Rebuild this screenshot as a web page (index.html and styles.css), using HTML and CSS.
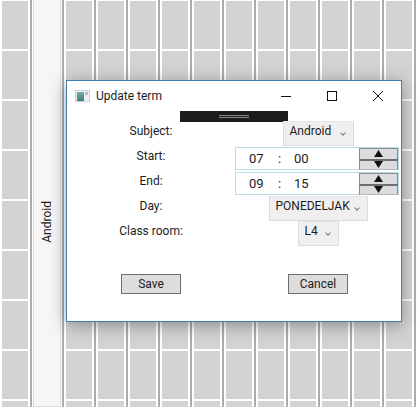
FILE: index.html
```html
<!DOCTYPE html>
<html lang="en">
    <head>
        <meta charset="UTF-8">
        <meta name="viewport" content="width=device-width, initial-scale=1.0">
        <title>Update term</title>
        <link rel="stylesheet" href="styles.css">
    </head>
    <body>
        <!-- Timetable behind the dialog -->
        <div class="timetable">
            <div class="column"><div class="cells"></div></div>
            <div class="column strip-column"><div class="strip"><span>Android</span></div></div>
            <div class="column"><div class="cells"></div></div>
            <div class="column"><div class="cells"></div></div>
            <div class="column"><div class="cells"></div></div>
            <div class="column"><div class="cells"></div></div>
            <div class="column"><div class="cells"></div></div>
            <div class="column"><div class="cells"></div></div>
            <div class="column"><div class="cells"></div></div>
            <div class="column"><div class="cells"></div></div>
            <div class="column"><div class="cells"></div></div>
            <div class="column"><div class="cells"></div></div>
            <div class="column"><div class="cells"></div></div>
        </div>

        <div class="dialog">
            <div class="title-bar">
                <svg class="app-icon" width="15" height="12" viewBox="0 0 15 12">
                    <defs>
                        <linearGradient id="icon-fill" x1="0" y1="0" x2="0" y2="1">
                            <stop offset="0" stop-color="#7fa9a6"/>
                            <stop offset="1" stop-color="#3d7f7c"/>
                        </linearGradient>
                    </defs>
                    <rect width="15" height="12" fill="#c9d2d6"/>
                    <rect x="1" y="1" width="13" height="10" fill="#eef1f2"/>
                    <rect x="2" y="2" width="7" height="9" fill="url(#icon-fill)"/>
                    <rect x="10" y="2" width="3" height="3" fill="#b4c2c7"/>
                </svg>
                <span class="title">Update term</span>
                <div class="window-buttons">
                    <svg width="12" height="12" viewBox="0 0 12 12"><path d="M1 6.5H11" stroke="#111" fill="none"/></svg>
                    <svg width="12" height="12" viewBox="0 0 12 12"><rect x="1.5" y="1.5" width="9" height="9" stroke="#111" fill="none"/></svg>
                    <svg width="12" height="12" viewBox="0 0 12 12"><path d="M1 1L11 11M11 1L1 11" stroke="#111" fill="none"/></svg>
                </div>
            </div>
            <div class="splitter"><div class="grip"></div></div>
            <div class="form">
                <label>Subject:</label>
                <div class="field"><div class="combo combo-subject">Android <span class="chevron"></span></div></div>
                <label>Start:</label>
                <div class="field">
                    <div class="time-picker">
                        <span class="hours">07</span><span class="colon">:</span><span class="minutes">00</span>
                        <div class="spinner">
                            <button><svg width="9" height="7" viewBox="0 0 9 7"><path d="M4.5 0L9 7H0Z"/></svg></button>
                            <button><svg width="9" height="7" viewBox="0 0 9 7"><path d="M0 0H9L4.5 7Z"/></svg></button>
                        </div>
                    </div>
                </div>
                <label>End:</label>
                <div class="field">
                    <div class="time-picker">
                        <span class="hours">09</span><span class="colon">:</span><span class="minutes">15</span>
                        <div class="spinner">
                            <button><svg width="9" height="7" viewBox="0 0 9 7"><path d="M4.5 0L9 7H0Z"/></svg></button>
                            <button><svg width="9" height="7" viewBox="0 0 9 7"><path d="M0 0H9L4.5 7Z"/></svg></button>
                        </div>
                    </div>
                </div>
                <label>Day:</label>
                <div class="field"><div class="combo combo-day">PONEDELJAK <span class="chevron"></span></div></div>
                <label>Class room:</label>
                <div class="field"><div class="combo combo-room">L4 <span class="chevron"></span></div></div>
            </div>
            <div class="actions">
                <div class="action"><button class="push">Save</button></div>
                <div class="action"><button class="push">Cancel</button></div>
            </div>
        </div>
    </body>
</html>
```

FILE: styles.css
```css
body {
    margin: 0;
    width: 418px;
    height: 407px;
    overflow: hidden;
    position: relative;
    background-color: white;
    font-family: Roboto, "Open Sans", sans-serif;
    font-size: 12px;
    color: #1c1c1c;
}
.timetable {
    display: flex;
    height: 407px;
}
.column {
    width: 28px;
    padding-left: 2px;
    border-right: 2px solid #acacb0;
    flex: none;
}
.cells {
    width: 26px;
    height: 407px;
    background: repeating-linear-gradient(white 0 1px, #d3d3d3 1px 49px, white 49px 50px);
}
.strip-column {
    padding-left: 1px;
    width: 29px;
}
.strip {
    width: 28px;
    height: 407px;
    box-sizing: border-box;
    border: 1px solid #dcdcdc;
    border-top: none;
    background-color: #f6f6f6;
    display: flex;
    align-items: center;
    justify-content: center;
}
.strip span {
    writing-mode: vertical-rl;
    transform: rotate(180deg);
    margin-top: 37px;
}
.dialog {
    position: absolute;
    left: 66px;
    top: 80px;
    width: 336px;
    height: 242px;
    box-sizing: border-box;
    border: 1px solid #3f7fb0;
    background-color: white;
    box-shadow: 0 3px 16px rgba(0, 0, 0, 0.35);
}
.title-bar {
    height: 30px;
    display: flex;
    align-items: center;
    padding-left: 8px;
}
.app-icon {
    flex: none;
}
.title {
    margin-left: 6px;
    flex: 1;
}
.window-buttons {
    display: flex;
    gap: 34px;
    padding-right: 17px;
}
.splitter {
    width: 108px;
    height: 11px;
    margin: 0 0 -1px 113px;
    background-color: #1c1c1c;
    display: flex;
    align-items: center;
    justify-content: center;
}
.grip {
    width: 30px;
    height: 3px;
    border-top: 1px solid #8a8a8a;
    border-bottom: 1px solid #8a8a8a;
    box-sizing: border-box;
}
.form {
    display: grid;
    grid-template-columns: 168px 166px;
    grid-auto-rows: 25px;
}
.form label {
    text-align: center;
    line-height: 17px;
    padding-top: 2px;
}
.field {
    display: flex;
    justify-content: center;
    align-items: flex-start;
}
.combo {
    height: 25px;
    box-sizing: border-box;
    border: 1px solid #dcdcdc;
    border-top-color: #e4e4e4;
    background-color: #efefef;
    padding: 0 6px 5px 6px;
    display: flex;
    align-items: center;
    justify-content: space-between;
    line-height: 18px;
    white-space: nowrap;
}
.combo-subject {
    width: 71px;
}
.combo-day {
    width: 99px;
}
.combo-room {
    width: 41px;
}
.chevron {
    width: 3px;
    height: 3px;
    border-right: 1px solid #777;
    border-bottom: 1px solid #777;
    transform: rotate(45deg);
    margin: 4px 2px 0 0;
}
.time-picker {
    width: 164px;
    height: 23px;
    margin: 1px 2px 0 0;
    box-sizing: border-box;
    border: 1px solid #b9dde4;
    display: flex;
    align-items: center;
    font-size: 13px;
    padding-left: 13px;
}
.hours {
    width: 29px;
}
.colon {
    width: 16px;
}
.minutes {
    flex: 1;
}
.spinner {
    display: flex;
    flex-direction: column;
    width: 39px;
    flex: none;
}
.spinner button {
    height: 11px;
    padding: 0;
    border: 1px solid #8c8c8c;
    border-bottom: none;
    background-color: #dcdcdc;
    display: flex;
    align-items: center;
    justify-content: center;
}
.spinner button + button {
    border-top: 2px solid #6e6e6e;
    border-bottom: 1px solid #b5b5b5;
}
.spinner svg {
    fill: #111;
    display: block;
}
.actions {
    display: grid;
    grid-template-columns: 168px 166px;
    margin-top: 28px;
}
.action {
    display: flex;
    justify-content: center;
}
.push {
    width: 60px;
    height: 20px;
    padding: 0;
    border: 1px solid #707070;
    background-color: #dddddd;
    font-family: inherit;
    font-size: 12px;
    color: #1c1c1c;
}
```
